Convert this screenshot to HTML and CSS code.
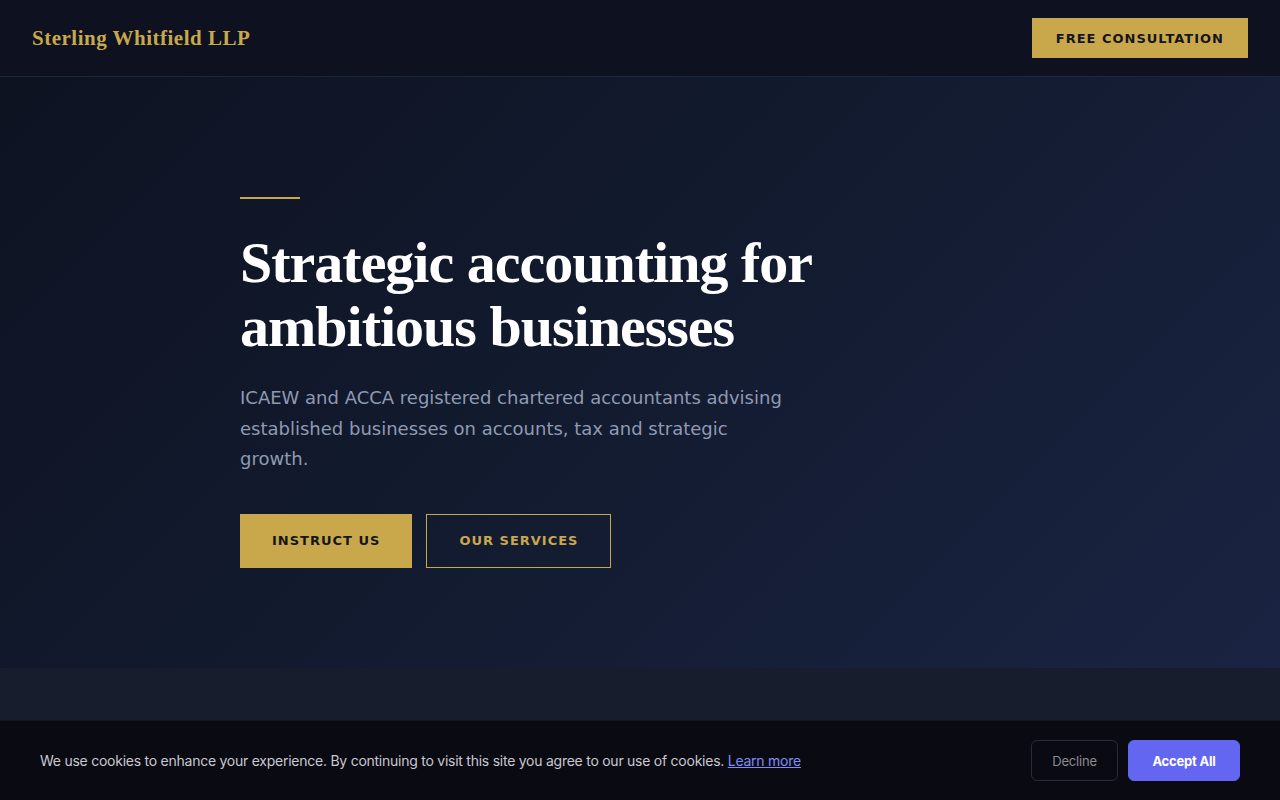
FILE: index.html
```html
<!DOCTYPE html>
<html lang="en">
<head>
<meta charset="utf-8">
<title>Sterling Whitfield LLP</title>
<link rel="stylesheet" href="styles.css">
</head>
<body>
<header class="site-header">
  <a class="logo" href="#">Sterling Whitfield LLP</a>
  <a class="btn btn-gold btn-small" href="#">Free Consultation</a>
</header>
<main>
  <section class="hero">
    <div class="hero-inner">
      <div class="rule"></div>
      <h1 class="hero-title">Strategic accounting for ambitious businesses</h1>
      <p class="hero-lead">ICAEW and ACCA registered chartered accountants advising established businesses on accounts, tax and strategic growth.</p>
      <div class="hero-actions">
        <a class="btn btn-gold btn-large" href="#">Instruct Us</a>
        <a class="btn btn-outline btn-large" href="#">Our Services</a>
      </div>
    </div>
  </section>
  <section class="next-section"></section>
</main>
<div class="cookie-bar">
  <p class="cookie-text">We use cookies to enhance your experience. By continuing to visit this site you agree to our use of cookies. <a href="#" class="cookie-link">Learn more</a></p>
  <div class="cookie-actions">
    <button class="cookie-btn cookie-decline">Decline</button>
    <button class="cookie-btn cookie-accept">Accept All</button>
  </div>
</div>
</body>
</html>
```

FILE: styles.css
```css
* { box-sizing: border-box; }
html, body { margin: 0; padding: 0; }
body {
  background: #171d2d;
  font-family: "DejaVu Sans", sans-serif;
  height: 800px;
  overflow: hidden;
}
a { text-decoration: none; }

.site-header {
  height: 77px;
  display: flex;
  align-items: center;
  justify-content: space-between;
  padding: 0 32px;
  background: #0d1120;
  border-bottom: 1px solid #1f2638;
}
.logo {
  font-family: "Liberation Serif", serif;
  font-weight: 700;
  font-size: 21px;
  letter-spacing: 0.5px;
  color: #c9a84c;
}

.btn {
  display: inline-flex;
  align-items: center;
  justify-content: center;
  font-family: "DejaVu Sans", sans-serif;
  font-weight: 700;
  text-transform: uppercase;
  font-size: 13px;
  letter-spacing: 1px;
}
.btn-gold { background: #c9a84c; color: #14161c; }
.btn-small { height: 40px; padding: 0 24px; }
.btn-large { height: 54px; padding: 0 32px; }
.btn-outline {
  border: 1px solid #c9a84c;
  color: #c9a84c;
}

.hero {
  height: 591px;
  background: linear-gradient(135deg, #0e1322 0%, #121a2e 45%, #1a2442 100%);
}
.hero-inner {
  padding: 120px 0 0 240px;
}
.rule {
  width: 60px;
  height: 2px;
  background: #c9a84c;
}
.hero-title {
  margin: 32px 0 0;
  max-width: 620px;
  font-family: "Liberation Serif", serif;
  font-weight: 700;
  font-size: 58px;
  line-height: 64px;
  letter-spacing: -1px;
  color: #ffffff;
}
.hero-lead {
  margin: 24px 0 0;
  max-width: 560px;
  font-size: 18px;
  line-height: 30.5px;
  color: #8f9ab2;
}
.hero-actions {
  display: flex;
  gap: 14px;
  margin-top: 39px;
}

.next-section {
  height: 52px;
  background: #171d2d;
}

.cookie-bar {
  position: fixed;
  left: 0;
  right: 0;
  bottom: 0;
  height: 80px;
  background: #0a0a12;
  border-top: 1px solid #13151f;
  display: flex;
  align-items: center;
  justify-content: space-between;
  padding: 0 40px;
  font-family: "Inter", sans-serif;
}
.cookie-text {
  margin: 0;
  font-size: 14px;
  letter-spacing: -0.25px;
  color: #c8c8d0;
}
.cookie-link {
  color: #818cf8;
  text-decoration: underline;
}
.cookie-actions {
  display: flex;
  gap: 10px;
}
.cookie-btn {
  font-family: "Inter", sans-serif;
  font-size: 13px;
  letter-spacing: -0.2px;
  height: 41px;
  border-radius: 6px;
  cursor: pointer;
}
.cookie-decline {
  width: 87px;
  background: transparent;
  border: 1px solid #2a2b36;
  color: #8a8a95;
}
.cookie-accept {
  width: 112px;
  background: #6366f1;
  border: 1px solid #6366f1;
  color: #ffffff;
  font-weight: 700;
}
```
